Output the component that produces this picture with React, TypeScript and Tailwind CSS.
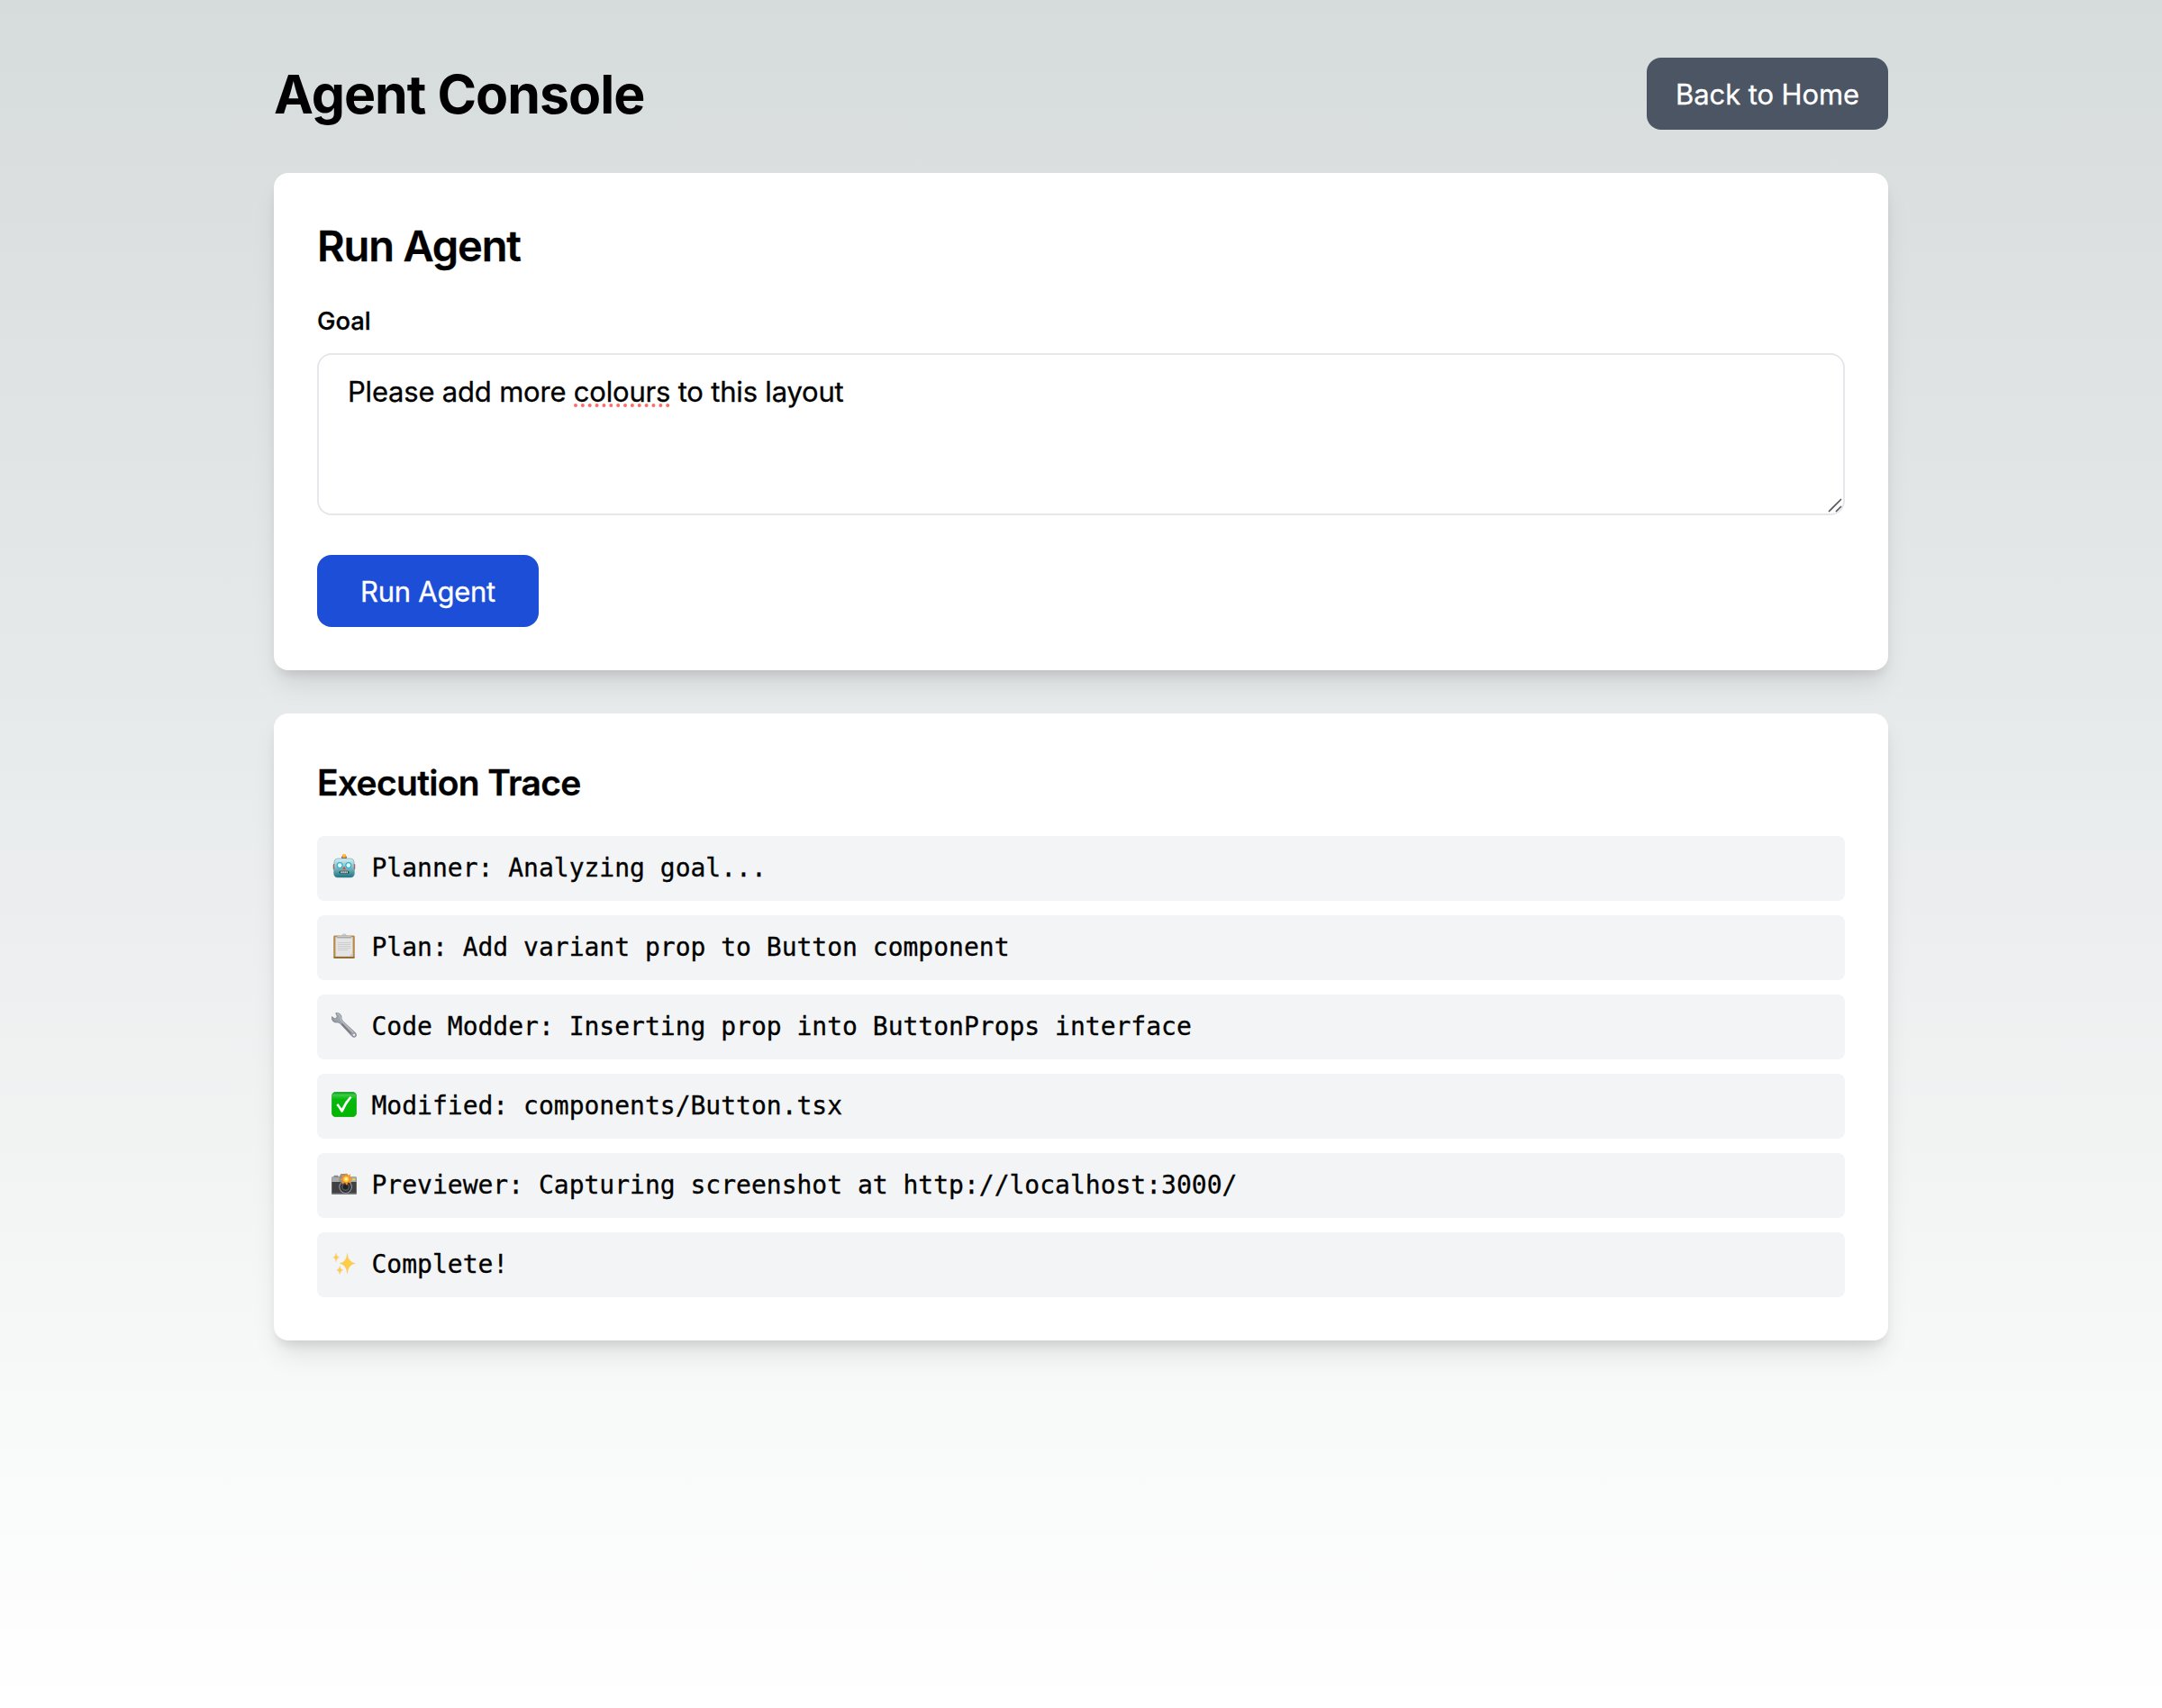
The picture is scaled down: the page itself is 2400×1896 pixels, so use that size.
import type { ReactNode } from "react";

const Robot = () => (
  <svg viewBox="0 0 28 28" className="h-7 w-7 shrink-0">
    <defs>
      <linearGradient id="robotFace" x1="0" y1="0" x2="0" y2="1">
        <stop offset="0" stopColor="#d5eef0" />
        <stop offset="0.4" stopColor="#93c6cd" />
        <stop offset="1" stopColor="#1c7481" />
      </linearGradient>
    </defs>
    <rect x="1.8" y="11" width="3" height="6.2" rx="1" fill="#d8322c" />
    <rect x="23.2" y="11" width="3" height="6.2" rx="1" fill="#d8322c" />
    <rect x="11.2" y="2.6" width="5.6" height="3" fill="#6f5a8e" />
    <circle cx="14" cy="2.3" r="2.2" fill="#fba31b" />
    <circle cx="14" cy="1.6" r="1" fill="#ffd84a" />
    <path d="M7 5h14q3.6 0 4 3.6l.4 12.4q.1 5-4.4 5H7q-4.5 0-4.4-5L3 8.600Q3.400 5 7 5Z" fill="url(#robotFace)" stroke="#4f9199" strokeWidth=".5" />
    <circle cx="9.2" cy="12.6" r="3.5" fill="#23b3d3" />
    <circle cx="18.8" cy="12.6" r="3.5" fill="#23b3d3" />
    <circle cx="9.2" cy="12.6" r="2.3" fill="#f6ffff" />
    <circle cx="18.8" cy="12.6" r="2.3" fill="#f6ffff" />
    <path d="M14 13.600l1.900 3.400h-3.800Z" fill="#e8452f" />
    <rect x="8.6" y="18.8" width="10.8" height="3" rx="1.5" fill="#20424a" />
    <path d="M10.200 20.300h8" stroke="#f1e9df" strokeWidth="2" strokeDasharray="1.4 .7" />
  </svg>
);

const Clipboard = () => (
  <svg viewBox="0 0 28 28" className="h-7 w-7 shrink-0">
    <rect x="2.2" y="2.4" width="23.6" height="25.4" rx="1.4" fill="#b78a4c" />
    <path d="M2.400 26.200h23.200v.6q0 1-1 1H3.400q-1 0-1-1Z" fill="#8a602a" />
    <path d="M4.400 4.200h19.200v21.600H4.400Z" fill="#e4e4e4" />
    <path d="M23.600 22v3.800H19Z" fill="#c9c9c9" />
    <path d="M7 10.500h14M7 12.500h14M7 14.500h14M7 16.500h14M7 18.500h11" stroke="#cdcdcf" strokeWidth="1.1" />
    <path d="M12 3a2 2 0 0 1 4 0" fill="none" stroke="#a9bcc6" strokeWidth="1.2" />
    <path d="M6.500 3h15l.8 2.600H5.700Z" fill="#a6a9ac" />
    <path d="M6.500 3h15v.8h-15Z" fill="#cfd3d6" />
  </svg>
);

const Wrench = () => (
  <svg viewBox="0 0 28 28" className="h-7 w-7 shrink-0">
    <defs>
      <linearGradient id="wrenchMetal" x1="0" y1="1" x2=".5" y2=".5">
        <stop offset="0" stopColor="#72757c" />
        <stop offset="1" stopColor="#a0a6af" />
      </linearGradient>
    </defs>
    <path
      d="M4.700 .6 6.200 4.200 5.200 6.200 3.600 6.700.4 4.600Q-.2 7.400 1.500 9.400 3.600 11.700 7 10.900L9.200 11.800 22.800 26.400Q25 28.300 27 26.600 28.600 24.600 26.600 22.600L12 9 11 6.700Q11.600 3.600 9.400 1.600 7.400-.1 4.700.6Z"
      fill="url(#wrenchMetal)"
      stroke="#6d717a"
      strokeWidth=".6"
    />
    <path d="M6.400 1.200Q9.600 1.800 9.800 5.200L10.600 8.600 24 21.800" fill="none" stroke="#ccd1d7" strokeWidth=".8" />
    <path d="M11.500 12.500 22 23.600" stroke="#796e72" strokeWidth="1.2" />
    <circle cx="25" cy="24.9" r="1.1" fill="#f3f4f6" />
  </svg>
);

const CheckBox = () => (
  <svg viewBox="0 0 28 28" className="h-7 w-7 shrink-0">
    <defs>
      <linearGradient id="checkGreen" x1="0" y1="0" x2="0" y2="1">
        <stop offset="0" stopColor="#0b9a1b" />
        <stop offset="0.12" stopColor="#3ccb45" />
        <stop offset="0.3" stopColor="#06b80c" />
        <stop offset="1" stopColor="#00b800" />
      </linearGradient>
    </defs>
    <rect x=".3" y=".3" width="27.4" height="27.4" rx="4.5" fill="url(#checkGreen)" stroke="#0a9c17" strokeWidth=".6" />
    <path d="M5.300 14.700 7.400 12.900 11.300 18.500Q14.500 11 20.400 5.300L22.600 6Q16.400 13.500 12.600 22.600L10.800 22.800Q8.600 18 5.300 14.700Z" fill="#fff" />
  </svg>
);

const Camera = () => (
  <svg viewBox="0 0 28 28" className="h-7 w-7 shrink-0">
    <rect x="2.6" y="4.8" width="5" height="2.5" rx=".6" fill="#8b8d8f" />
    <rect x=".2" y="6.4" width="27.6" height="19.4" rx="1.2" fill="#3f4143" />
    <path d="M.2 12V7.600q0-1.200 1.200-1.200h25.200q1.200 0 1.200 1.200V12Z" fill="#a9abac" />
    <path d="M8.500 6.400 10.400 3h7.200l1.900 3.400V12h-11Z" fill="#8e9092" />
    <rect x=".2" y="24.4" width="27.6" height="1.4" rx=".6" fill="#85878a" />
    <rect x="23" y="8.2" width="3.2" height="2.2" fill="#e6d552" />
    <circle cx="15.6" cy="17.6" r="7.3" fill="#9b9ea1" />
    <circle cx="15.6" cy="17.6" r="6.3" fill="#303236" />
    <circle cx="15.6" cy="17.6" r="4.4" fill="#55585d" />
    <circle cx="15.6" cy="17.6" r="3" fill="#202228" />
    <path
      d="M16 1.800 17.700 5.200 21.400 3.200 20.200 7 24 8.200 20.500 10 22.200 13.600 18.400 12.600 17 16 15 12.800 11.300 14.800 12.400 10.800 8.800 9.200 12.500 7.600 11.200 4 14.700 5.200Z"
      fill="#f9941e"
    />
    <circle cx="16.3" cy="8.9" r="3" fill="#ffd23d" />
    <circle cx="16.3" cy="8.9" r="1.4" fill="#fff6c8" />
  </svg>
);

const Sparkles = () => (
  <svg viewBox="0 0 28 28" className="h-7 w-7 shrink-0" fill="#fdcd48" stroke="#f5c9a0" strokeWidth=".3">
    <path d="M17.500 3Q18.400 13.200 26.400 14.500 18.400 15.800 17.500 26 16.600 15.800 9 14.500 16.600 13.200 17.500 3Z" />
    <path d="M5 2.700Q5.600 7.200 8.800 7.800 5.600 8.400 5 13 4.400 8.400 1.600 7.800 4.400 7.200 5 2.700Z" />
    <path d="M9.200 17.300Q9.800 21.300 12.800 21.900 9.800 22.500 9.200 26.700 8.600 22.500 5.600 21.900 8.600 21.300 9.200 17.300Z" />
  </svg>
);

/* Dotted spell-check marker that sits below a word. */
const SpellingMarker = () => (
  <svg viewBox="0 0 108 4" className="absolute top-[37px] left-0 h-1 w-[108px]">
    <path d="M2 2H106" stroke="#ff6b66" strokeWidth="4" strokeLinecap="round" strokeDasharray="0 7.86" />
  </svg>
);

const ResizeGrip = () => (
  <svg viewBox="0 0 18 18" className="absolute right-0 bottom-0 h-[18px] w-[18px]">
    <path d="M2 16 16 2M10 16l6-6" stroke="#555" strokeWidth="1.6" />
  </svg>
);

const Card = ({ children }: { children: ReactNode }) => (
  <section className="rounded-2xl bg-white p-12 shadow-[0_20px_30px_-6px_rgb(0_0_0/0.1),0_8px_12px_-4px_rgb(0_0_0/0.1)]">
    {children}
  </section>
);

const trace: { icon: ReactNode; text: string }[] = [
  { icon: <Robot />, text: "Planner: Analyzing goal..." },
  { icon: <Clipboard />, text: "Plan: Add variant prop to Button component" },
  { icon: <Wrench />, text: "Code Modder: Inserting prop into ButtonProps interface" },
  { icon: <CheckBox />, text: "Modified: components/Button.tsx" },
  { icon: <Camera />, text: "Previewer: Capturing screenshot at http://localhost:3000/" },
  { icon: <Sparkles />, text: "Complete!" },
];

export default function App() {
  return (
    <div className="min-h-[1896px] bg-linear-to-b/srgb from-[#d6dbdc] to-white pt-16 font-['Inter',sans-serif] text-black">
      <main className="mx-auto flex w-[1792px] flex-col gap-12">
        <header className="flex items-center justify-between">
          <h1 className="pt-0.5 text-[59px] leading-[72px] font-bold tracking-[-1px]">Agent Console</h1>
          <button className="h-20 w-[268px] rounded-2xl bg-[#4b5563] pt-0.5 text-[31px] leading-[48px] tracking-[-0.1px] whitespace-nowrap text-white [-webkit-text-stroke:0.3px_white]">
            Back to Home
          </button>
        </header>
        <Card>
          <h2 className="mb-8 h-16 pt-px text-[47px] leading-[64px] font-semibold tracking-[-1.15px] [-webkit-text-stroke:0.3px_black]">
            Run Agent
          </h2>
          <label className="mb-4 block h-10 text-[27.4px] leading-10 font-medium [-webkit-text-stroke:0.3px_black]">Goal</label>
          <div className="relative mb-11 h-[180px] rounded-2xl border-2 border-gray-200 px-8 pt-[17px] text-[31px] leading-[48px] tracking-[-0.2px] [-webkit-text-stroke:0.3px_black]">
            Please add more{" "}
            <span className="relative inline-block">
              colours
              <SpellingMarker />
            </span>{" "}
            to this layout
            <ResizeGrip />
          </div>
          <button className="block h-20 w-[246px] rounded-2xl bg-[#1d4ed8] pt-0.5 text-[31px] leading-[48px] tracking-[-0.25px] whitespace-nowrap text-white [-webkit-text-stroke:0.3px_white]">
            Run Agent
          </button>
        </Card>
        <Card>
          <h3 className="mb-8 h-14 pt-px text-[39px] leading-[56px] font-semibold tracking-[-0.69px] [-webkit-text-stroke:0.3px_black]">
            Execution Trace
          </h3>
          <ul className="flex flex-col gap-4">
            {trace.map((row) => (
              <li
                key={row.text}
                className="flex h-[72px] gap-[16.5px] rounded-lg bg-gray-100 p-4 font-['DejaVu_Sans_Mono',monospace] text-[28px] leading-10 [-webkit-text-stroke:0.3px_black]"
              >
                <span className="mt-1 flex">{row.icon}</span>
                <span>{row.text}</span>
              </li>
            ))}
          </ul>
        </Card>
      </main>
    </div>
  );
}
